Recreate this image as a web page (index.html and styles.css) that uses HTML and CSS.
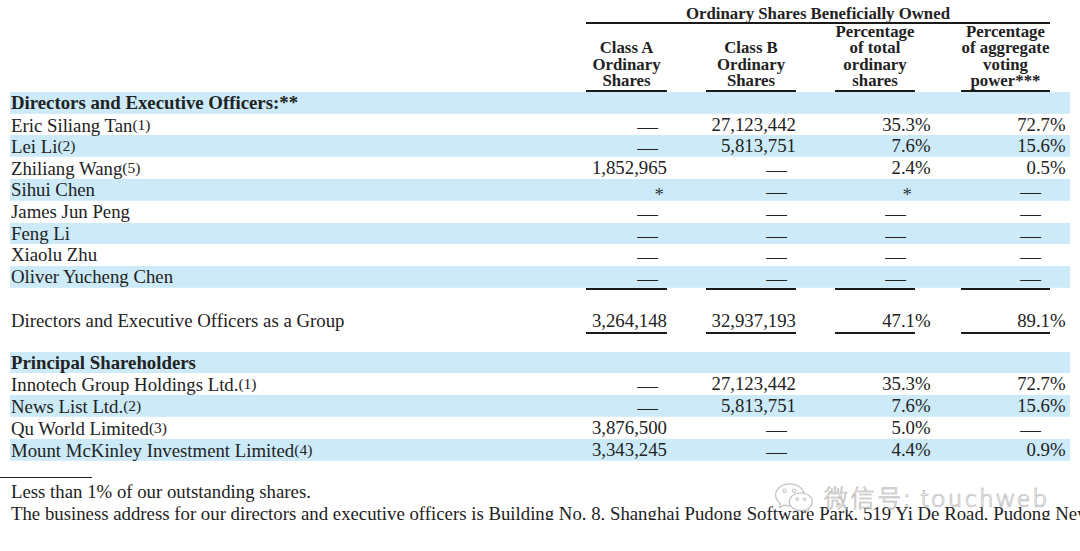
FILE: index.html
```html
<!DOCTYPE html>
<html lang="en">
<head>
<meta charset="utf-8">
<title>Ordinary Shares Beneficially Owned</title>
<link rel="stylesheet" href="styles.css">
</head>
<body>
<div class="page">
  <div class="sheet">
    <div class="head">
      <div class="grp">Ordinary Shares Beneficially Owned</div>
      <div class="ch ca">Class A<br>Ordinary<br>Shares</div>
      <div class="ch cb">Class B<br>Ordinary<br>Shares</div>
      <div class="ch cc">Percentage<br>of total<br>ordinary<br>shares</div>
      <div class="ch cd">Percentage<br>of aggregate<br>voting<br>power***</div>
    </div>

    <div class="row band"><div class="name sec">Directors and Executive Officers:**</div></div>
    <div class="row">
      <div class="name">Eric Siliang Tan<span class="fn">(1)</span></div>
      <div class="v ca"><span class="dash">—</span></div>
      <div class="v cb">27,123,442</div>
      <div class="v cc">35.3<span class="pc">%</span></div>
      <div class="v cd">72.7<span class="pc">%</span></div>
    </div>
    <div class="row band">
      <div class="name">Lei Li<span class="fn">(2)</span></div>
      <div class="v ca"><span class="dash">—</span></div>
      <div class="v cb">5,813,751</div>
      <div class="v cc">7.6<span class="pc">%</span></div>
      <div class="v cd">15.6<span class="pc">%</span></div>
    </div>
    <div class="row">
      <div class="name">Zhiliang Wang<span class="fn">(5)</span></div>
      <div class="v ca">1,852,965</div>
      <div class="v cb"><span class="dash">—</span></div>
      <div class="v cc">2.4<span class="pc">%</span></div>
      <div class="v cd">0.5<span class="pc">%</span></div>
    </div>
    <div class="row band">
      <div class="name">Sihui Chen</div>
      <div class="v ca"><span class="ast">*</span></div>
      <div class="v cb"><span class="dash">—</span></div>
      <div class="v cc"><span class="ast">*</span></div>
      <div class="v cd"><span class="dash">—</span></div>
    </div>
    <div class="row">
      <div class="name">James Jun Peng</div>
      <div class="v ca"><span class="dash">—</span></div>
      <div class="v cb"><span class="dash">—</span></div>
      <div class="v cc"><span class="dash">—</span></div>
      <div class="v cd"><span class="dash">—</span></div>
    </div>
    <div class="row band">
      <div class="name">Feng Li</div>
      <div class="v ca"><span class="dash">—</span></div>
      <div class="v cb"><span class="dash">—</span></div>
      <div class="v cc"><span class="dash">—</span></div>
      <div class="v cd"><span class="dash">—</span></div>
    </div>
    <div class="row">
      <div class="name">Xiaolu Zhu</div>
      <div class="v ca"><span class="dash">—</span></div>
      <div class="v cb"><span class="dash">—</span></div>
      <div class="v cc"><span class="dash">—</span></div>
      <div class="v cd"><span class="dash">—</span></div>
    </div>
    <div class="row band ruled">
      <div class="name">Oliver Yucheng Chen</div>
      <div class="v ca"><span class="dash">—</span></div>
      <div class="v cb"><span class="dash">—</span></div>
      <div class="v cc"><span class="dash">—</span></div>
      <div class="v cd"><span class="dash">—</span></div>
    </div>

    <div class="row ruled total">
      <div class="name">Directors and Executive Officers as a Group</div>
      <div class="v ca">3,264,148</div>
      <div class="v cb">32,937,193</div>
      <div class="v cc">47.1<span class="pc">%</span></div>
      <div class="v cd">89.1<span class="pc">%</span></div>
    </div>

    <div class="row band principal"><div class="name sec">Principal Shareholders</div></div>
    <div class="row">
      <div class="name">Innotech Group Holdings Ltd.<span class="fn">(1)</span></div>
      <div class="v ca"><span class="dash">—</span></div>
      <div class="v cb">27,123,442</div>
      <div class="v cc">35.3<span class="pc">%</span></div>
      <div class="v cd">72.7<span class="pc">%</span></div>
    </div>
    <div class="row band">
      <div class="name">News List Ltd.<span class="fn">(2)</span></div>
      <div class="v ca"><span class="dash">—</span></div>
      <div class="v cb">5,813,751</div>
      <div class="v cc">7.6<span class="pc">%</span></div>
      <div class="v cd">15.6<span class="pc">%</span></div>
    </div>
    <div class="row">
      <div class="name">Qu World Limited<span class="fn">(3)</span></div>
      <div class="v ca">3,876,500</div>
      <div class="v cb"><span class="dash">—</span></div>
      <div class="v cc">5.0<span class="pc">%</span></div>
      <div class="v cd"><span class="dash">—</span></div>
    </div>
    <div class="row band">
      <div class="name">Mount McKinley Investment Limited<span class="fn">(4)</span></div>
      <div class="v ca">3,343,245</div>
      <div class="v cb"><span class="dash">—</span></div>
      <div class="v cc">4.4<span class="pc">%</span></div>
      <div class="v cd">0.9<span class="pc">%</span></div>
    </div>
  </div>

  <div class="foot">
    <div class="rule"></div>
    <div class="notes">
      <p>Less than 1% of our outstanding shares.</p>
      <p>The business address for our directors and executive officers is Building No. 8, Shanghai Pudong Software Park, 519 Yi De Road, Pudong New Area, Shanghai, China.</p>
    </div>
  </div>

  <div class="wm">
    <svg class="wm-logo" width="42" height="32" viewBox="0 0 40 30" aria-hidden="true">
      <path d="M16 2.5C8.3 2.5 2.5 7.3 2.5 13.2c0 3.3 1.8 6.1 4.6 8l-1.2 4 4.5-2.5c1.8.5 3.6.8 5.6.8" fill="rgba(255,255,255,0.85)" stroke="#c4c4c4" stroke-width="1.2" stroke-linecap="round" stroke-linejoin="round"/>
      <path d="M16 2.5c6.9 0 12.4 3.9 13.4 9" fill="none" stroke="#c4c4c4" stroke-width="1.2" stroke-linecap="round"/>
      <ellipse cx="26.5" cy="19.5" rx="11" ry="8.5" fill="rgba(255,255,255,0.9)" stroke="#c4c4c4" stroke-width="1.2"/>
      <path d="M33.5 26l1.2 3.2-3.8-2" fill="rgba(255,255,255,0.9)" stroke="#c4c4c4" stroke-width="1.1" stroke-linejoin="round"/>
      <circle cx="11" cy="9" r="1.6" fill="none" stroke="#c4c4c4" stroke-width="1"/>
      <circle cx="20" cy="9" r="1.6" fill="none" stroke="#c4c4c4" stroke-width="1"/>
      <circle cx="23" cy="17" r="1.3" fill="none" stroke="#c4c4c4" stroke-width="1"/>
      <circle cx="30" cy="17" r="1.3" fill="none" stroke="#c4c4c4" stroke-width="1"/>
    </svg>
    <span class="wm-text">微信号: touchweb</span>
  </div>
</div>
</body>
</html>
```

FILE: styles.css
```css
:root {
  --blue: #cdeaf9;
  --ink: #222222;
}

html, body {
  margin: 0;
  padding: 0;
  background: #ffffff;
  overflow: hidden;
}

.page {
  position: relative;
  width: 1080px;
  height: 551px;
  overflow: hidden;
  font-family: "Liberation Serif", "Times New Roman", serif;
  color: var(--ink);
  font-size: 18.8px;
}

.sheet {
  margin-left: 10px;
  width: 1060px;
}

.head,
.row {
  display: grid;
  grid-template-columns: 576px 81px 129px 119px 135px 20px;
}

/* column placement */
.ca { grid-column: 2; }
.cb { grid-column: 3; margin-left: 39px; }
.cc { grid-column: 4; margin-left: 39px; }
.cd { grid-column: 5; margin-left: 46px; }

/* header */
.head {
  padding-top: 4.5px;
  font-weight: bold;
  font-size: 16.8px;
  text-align: center;
}

.grp {
  grid-column: 2 / 6;
  grid-row: 1;
  line-height: 17px;
  border-bottom: 2px solid #1a1a1a;
}

.ch {
  grid-row: 2;
  align-self: end;
  line-height: 16.6px;
  border-bottom: 2px solid #1a1a1a;
}

/* body rows */
.row {
  grid-template-rows: 21.8px;
  line-height: 21.8px;
  white-space: nowrap;
}

.row.ruled {
  grid-template-rows: 23.8px;
}

.band {
  background: linear-gradient(var(--blue), var(--blue)) top left / 100% 21.8px no-repeat;
}

.name {
  grid-column: 1;
  padding-left: 1px;
}

.sec {
  font-weight: bold;
}

.fn {
  font-size: 15.5px;
  vertical-align: 2px;
}

.v {
  text-align: right;
}

.ruled .v {
  border-bottom: 2px solid #1a1a1a;
}

.pc {
  margin-right: -0.833em;
}

.dash {
  display: inline-block;
  padding-right: 8px;
  vertical-align: -2px;
  transform: scaleX(1.1);
  transform-origin: right center;
}

.ast {
  display: inline-block;
  padding-right: 3px;
  vertical-align: -5px;
  color: #333;
}

.total {
  margin-top: 20px;
}

.principal {
  margin-top: 17.8px;
}

/* footnotes */
.foot {
  margin-top: 16px;
}

.rule {
  width: 92px;
  border-top: 1.5px solid #222;
}

.notes {
  padding-left: 11px;
  padding-top: 3.4px;
  height: 38.6px;
  overflow: hidden;
  white-space: nowrap;
  line-height: 22px;
}

.notes p {
  margin: 0;
}

/* watermark */
.wm {
  position: absolute;
  left: 773px;
  top: 481px;
  display: flex;
  align-items: center;
  gap: 9px;
}

.wm-text {
  font-family: "Noto Sans CJK SC", "Noto Sans", sans-serif;
  font-weight: 300;
  font-size: 24px;
  letter-spacing: 2.6px;
  color: rgba(255, 255, 255, 0.95);
  -webkit-text-stroke: 0.6px #b0b0b0;
  line-height: 30px;
}
```
